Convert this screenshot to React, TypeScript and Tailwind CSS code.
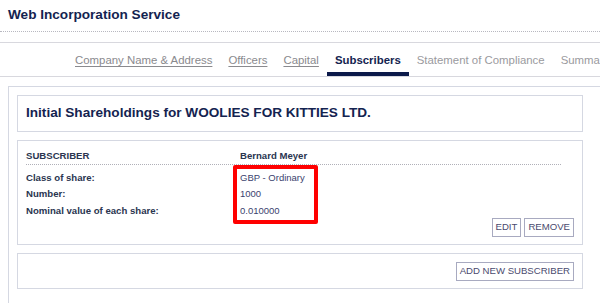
import React from "react";

const font = { fontFamily: '"Liberation Sans", Arial, sans-serif' };

export default function App() {
  const links = [
    { t: "Company Name & Address", k: "link" },
    { t: "Officers", k: "link" },
    { t: "Capital", k: "link" },
    { t: "Subscribers", k: "active" },
    { t: "Statement of Compliance", k: "plain" },
    { t: "Summary", k: "plain" },
  ];
  return (
    <div className="w-[600px] h-[303px] overflow-hidden bg-white" style={font}>
      <div className="h-[32px] px-2 flex items-center border-b border-dotted border-[#b8b8c0]">
        <span className="text-[13.6px] font-bold text-[#142350]">Web Incorporation Service</span>
      </div>
      <div className="h-[10px]" />
      <div className="h-[35px] border-t border-b border-[#d8d8de] flex items-stretch pl-[67px] whitespace-nowrap overflow-hidden">
        {links.map((l) => (
          <div
            key={l.t}
            className={
              "px-2 flex items-center text-[11.4px] pt-[2px] " +
              (l.k === "active"
                ? "font-bold text-[#14234f] border-b-[4px] border-[#0c1a4a] pt-[6px]"
                : l.k === "link"
                ? "text-[#8a8a8e] underline decoration-[#8a8a8e] underline-offset-2"
                : "text-[#9a9a9e]")
            }
          >
            {l.t}
          </div>
        ))}
      </div>
      <div className="h-[9px]" />
      <div className="ml-2 w-[620px] h-[300px] border-l border-t border-[#d5d8e2] pt-2 pl-2 flex flex-col gap-2">
        <div className="w-[566px] h-[37px] border border-[#d5d8e2] flex items-center pl-2">
          <span className="text-[13.6px] font-bold text-[#142350]">
            Initial Shareholdings for WOOLIES FOR KITTIES LTD.
          </span>
        </div>
        <div className="relative w-[566px] h-[105px] border border-[#d5d8e2] px-2 pt-[8px] text-[9.6px]">
          <div className="flex h-[16px] items-center font-bold text-[#2a3550] w-[535px] border-b border-dotted border-[#b0b0b8]">
            <span className="w-[214px]">SUBSCRIBER</span>
            <span>Bernard Meyer</span>
          </div>
          <div className="pt-[4.5px]">
            {[
              ["Class of share:", "GBP - Ordinary"],
              ["Number:", "1000"],
              ["Nominal value of each share:", "0.010000"],
            ].map(([a, b]) => (
              <div key={a} className="flex h-[16.5px] items-center">
                <span className="w-[214px] font-bold text-[#2a3550]">{a}</span>
                <span className="text-[#3a3f6e] text-[9.5px]">{b}</span>
              </div>
            ))}
          </div>
          <div className="absolute right-2 top-[77px] flex gap-[3px]">
            <button className="h-[19px] px-[3px] border border-[#a8aac0] text-[9.6px] text-[#4a4a6e] bg-white">EDIT</button>
            <button className="h-[19px] px-[3px] border border-[#a8aac0] text-[9.6px] text-[#4a4a6e] bg-white">REMOVE</button>
          </div>
          <div className="absolute left-[215px] top-[24px] w-[85px] h-[59px] border-[4px] border-[#ff0000] rounded-[2px]" />
        </div>
        <div className="w-[566px] h-[36px] border border-[#d5d8e2] flex items-center justify-end pr-2">
          <button className="h-[19px] px-[3px] border border-[#a8aac0] text-[9.6px] text-[#4a4a6e] bg-white">ADD NEW SUBSCRIBER</button>
        </div>
      </div>
    </div>
  );
}
